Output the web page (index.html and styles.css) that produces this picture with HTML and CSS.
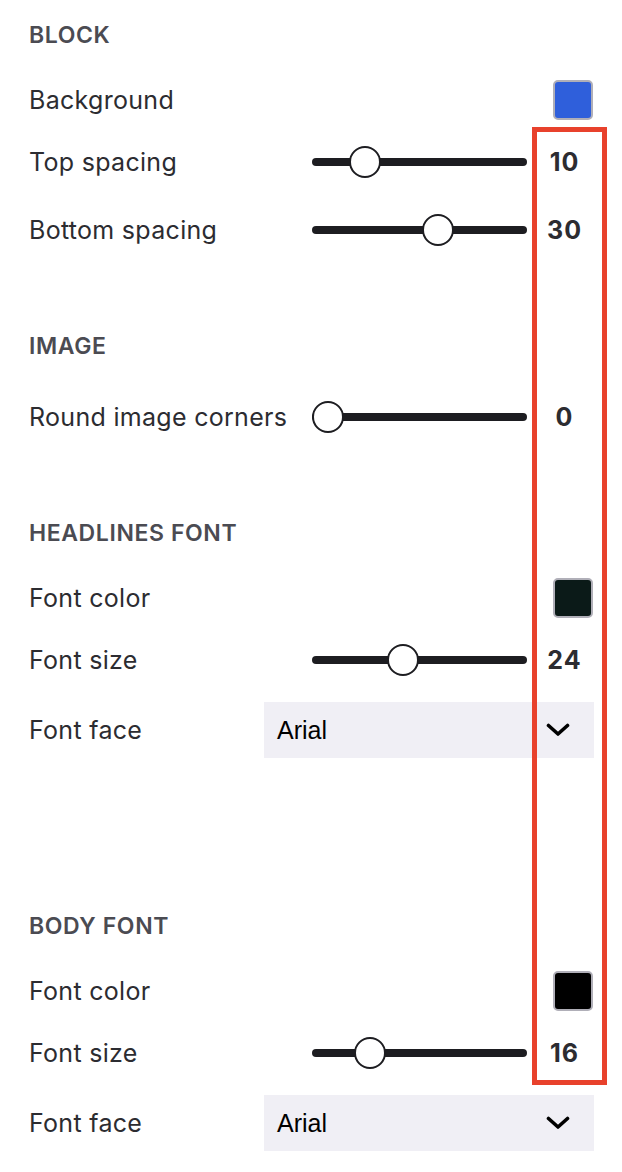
FILE: index.html
```html
<!DOCTYPE html>
<html>
<head>
  <link rel="stylesheet" href="styles.css">
</head>
<body>
  <div class="panel">
    <div class="section">
      <div class="section-title">Block</div>
      <div class="row">
        <span class="row-label">Background</span>
        <span class="swatch swatch-blue"></span>
      </div>
      <div class="row row-slider">
        <span class="row-label">Top spacing</span>
        <input type="range" min="0" max="50" value="10">
        <span class="row-value">10</span>
      </div>
      <div class="row row-slider">
        <span class="row-label">Bottom spacing</span>
        <input type="range" min="0" max="50" value="30">
        <span class="row-value">30</span>
      </div>
    </div>

    <div class="section">
      <div class="section-title">Image</div>
      <div class="row row-slider">
        <span class="row-label">Round image corners</span>
        <input type="range" min="0" max="50" value="0">
        <span class="row-value">0</span>
      </div>
    </div>

    <div class="section section-wide">
      <div class="section-title">Headlines font</div>
      <div class="row">
        <span class="row-label">Font color</span>
        <span class="swatch swatch-dark"></span>
      </div>
      <div class="row row-slider">
        <span class="row-label">Font size</span>
        <input type="range" min="6" max="50" value="24">
        <span class="row-value">24</span>
      </div>
      <div class="row row-select">
        <span class="row-label">Font face</span>
        <div class="select">
          <span>Arial</span>
          <svg class="chevron" width="24" height="14" viewBox="0 0 24 14"><path d="M2.5 2.5 L12 11 L21.5 2.5" fill="none" stroke="#000" stroke-width="3.6" stroke-linecap="round" stroke-linejoin="round"/></svg>
        </div>
      </div>
    </div>

    <div class="section">
      <div class="section-title">Body font</div>
      <div class="row">
        <span class="row-label">Font color</span>
        <span class="swatch swatch-black"></span>
      </div>
      <div class="row row-slider">
        <span class="row-label">Font size</span>
        <input type="range" min="6" max="50" value="16">
        <span class="row-value">16</span>
      </div>
      <div class="row row-select">
        <span class="row-label">Font face</span>
        <div class="select">
          <span>Arial</span>
          <svg class="chevron" width="24" height="14" viewBox="0 0 24 14"><path d="M2.5 2.5 L12 11 L21.5 2.5" fill="none" stroke="#000" stroke-width="3.6" stroke-linecap="round" stroke-linejoin="round"/></svg>
        </div>
      </div>
    </div>
  </div>

  <div class="highlight"></div>
</body>
</html>
```
FILE: styles.css
```css
:root {
  --text-color: #2c2c31;
  --title-color: #4b4b52;
  --track-color: #1d1d21;
  --select-bg: #f0eff5;
}

body {
  margin: 0;
  background: white;
  font-family: 'Inter', 'Noto Sans', sans-serif;
  color: var(--text-color);
  position: relative;
}

.panel {
  padding: 20px 28px 0 29px;
}

.section {
  display: flex;
  flex-direction: column;
  gap: 16px;
  margin-bottom: 75px;
}

.section-wide {
  margin-bottom: 153px;
}

.section-title {
  font-size: 23px;
  font-weight: 600;
  letter-spacing: 0.6px;
  line-height: 30px;
  text-transform: uppercase;
  color: var(--title-color);
  margin-bottom: 14px;
}

.row {
  display: flex;
  align-items: center;
  justify-content: space-between;
  height: 40px;
}

.row-slider {
  height: 52px;
}

.row-select {
  height: 56px;
}

.row-label {
  flex: 1;
  font-size: 25px;
  letter-spacing: 0.3px;
  line-height: 30px;
}

.row-value {
  width: 59px;
  margin-left: 8px;
  text-align: center;
  font-size: 25px;
  font-weight: 700;
  letter-spacing: 1px;
  line-height: 30px;
}

/* Colour swatches */
.swatch {
  width: 40px;
  height: 40px;
  box-sizing: border-box;
  border: 2px solid #b0afb8;
  border-radius: 5px;
  margin-right: 1px;
}

.swatch-blue {
  background: #2f5fdb;
}

.swatch-dark {
  background: #0b1a18;
}

.swatch-black {
  background: #000;
}

/* Range sliders */
input[type="range"] {
  -webkit-appearance: none;
  appearance: none;
  width: 215px;
  height: 32px;
  margin: 0;
  background: transparent;
  outline: none;
}

input[type="range"]::-webkit-slider-runnable-track {
  height: 8px;
  background: var(--track-color);
  border-radius: 4px;
}

input[type="range"]::-webkit-slider-thumb {
  -webkit-appearance: none;
  box-sizing: border-box;
  width: 32px;
  height: 32px;
  margin-top: -12px;
  background: white;
  border: 2px solid var(--track-color);
  border-radius: 50%;
}

/* Dropdowns */
.select {
  width: 330px;
  height: 56px;
  box-sizing: border-box;
  display: flex;
  align-items: center;
  justify-content: space-between;
  padding: 0 24px 0 13px;
  background: var(--select-bg);
  font-family: 'Liberation Sans', Arial, sans-serif;
  font-size: 25px;
  color: #000;
}

.chevron {
  display: block;
}

/* Annotation frame */
.highlight {
  position: absolute;
  left: 532px;
  top: 127px;
  width: 75px;
  height: 958px;
  box-sizing: border-box;
  border: 5px solid #e8412c;
  pointer-events: none;
}
```
